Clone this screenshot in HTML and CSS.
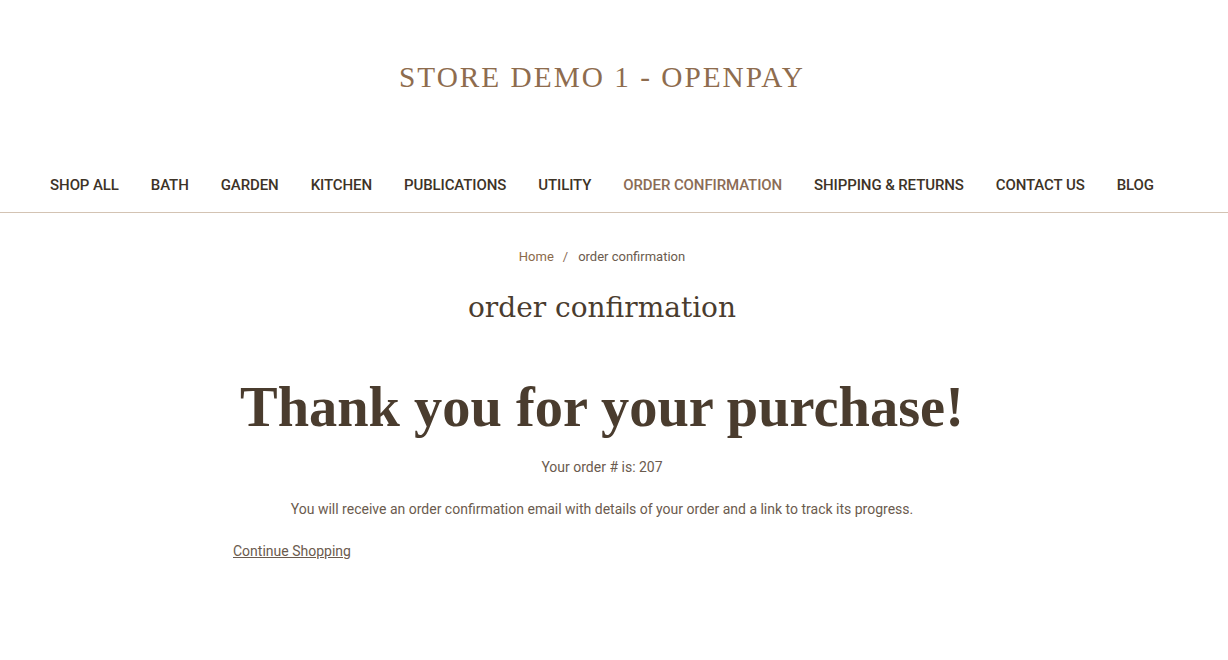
FILE: index.html
```html
<!DOCTYPE html>
<html>
<head>
  <title>order confirmation - Store Demo 1 - Openpay</title>
  <link rel="stylesheet" href="styles.css">
</head>
<body>
  <header class="header">
    <div class="logo">Store Demo 1 - Openpay</div>
    <nav class="nav">
      <a href="#">Shop All</a>
      <a href="#">Bath</a>
      <a href="#">Garden</a>
      <a href="#">Kitchen</a>
      <a href="#">Publications</a>
      <a href="#">Utility</a>
      <a href="#" class="active">Order Confirmation</a>
      <a href="#">Shipping &amp; Returns</a>
      <a href="#">Contact Us</a>
      <a href="#">Blog</a>
    </nav>
  </header>

  <main class="page">
    <ul class="breadcrumbs">
      <li><a href="#">Home</a></li>
      <li class="current">order confirmation</li>
    </ul>
    <h1 class="page-title">order confirmation</h1>

    <div class="content">
      <h2 class="thanks">Thank you for your purchase!</h2>
      <p class="center">Your order # is: 207</p>
      <p class="center">You will receive an order confirmation email with details of your order and a link to track its progress.</p>
      <p><a href="#" class="continue">Continue Shopping</a></p>
    </div>
  </main>
</body>
</html>
```

FILE: styles.css
```css
html {
  background: #ffffff;
}
body {
  margin: 0;
  font-family: Roboto, "Liberation Sans", sans-serif;
  color: #6b5b4e;
}

/* HEADER */
.header {
  border-bottom: 1px solid #d3c3b3;
}
.logo,
.nav,
.page {
  padding-right: 24px; /* page sits a little left of center, like the live store */
}
.logo {
  text-align: center;
  font-family: "Liberation Serif", "DejaVu Serif", serif;
  font-size: 29.3px;
  letter-spacing: 2px;
  text-transform: uppercase;
  color: #8e6c4e;
  padding-top: 61px;
  height: 115px;
}
.nav {
  display: flex;
  justify-content: center;
  padding-bottom: 18px;
}
.nav a {
  font-size: 15px;
  font-weight: 500;
  text-transform: uppercase;
  color: #3d3327;
  text-decoration: none;
  padding: 0 16px;
  letter-spacing: -0.1px;
}
.nav a.active {
  color: #8b6c55;
}

/* BREADCRUMBS */
.breadcrumbs {
  list-style: none;
  margin: 0;
  padding: 36px 0 0 0;
  display: flex;
  justify-content: center;
  font-size: 13px;
}
.breadcrumbs li + li:before {
  content: "/";
  padding: 0 10px 0 9px;
  color: #8b6c55;
}
.breadcrumbs a {
  color: #8b6a4a;
  text-decoration: none;
}
.breadcrumbs .current {
  color: #6b5b4e;
}

.page-title {
  text-align: center;
  font-family: "DejaVu Serif", "Liberation Serif", serif;
  font-weight: normal;
  font-size: 28px;
  color: #4a3c2e;
  margin: 27px 0 0 0;
}

/* CONTENT */
.content {
  max-width: 738px;
  margin: 0 auto;
  padding-top: 52px;
  font-size: 14px;
}
.thanks {
  text-align: center;
  font-family: "Liberation Serif", "DejaVu Serif", serif;
  font-weight: bold;
  font-size: 56.4px;
  line-height: 63px;
  color: #4a3c2e;
  margin: 0 -60px 20px -60px;
}
.content p {
  margin: 0 0 26px 0;
}
.center {
  text-align: center;
}
.continue {
  color: #6b5b4e;
}
```
